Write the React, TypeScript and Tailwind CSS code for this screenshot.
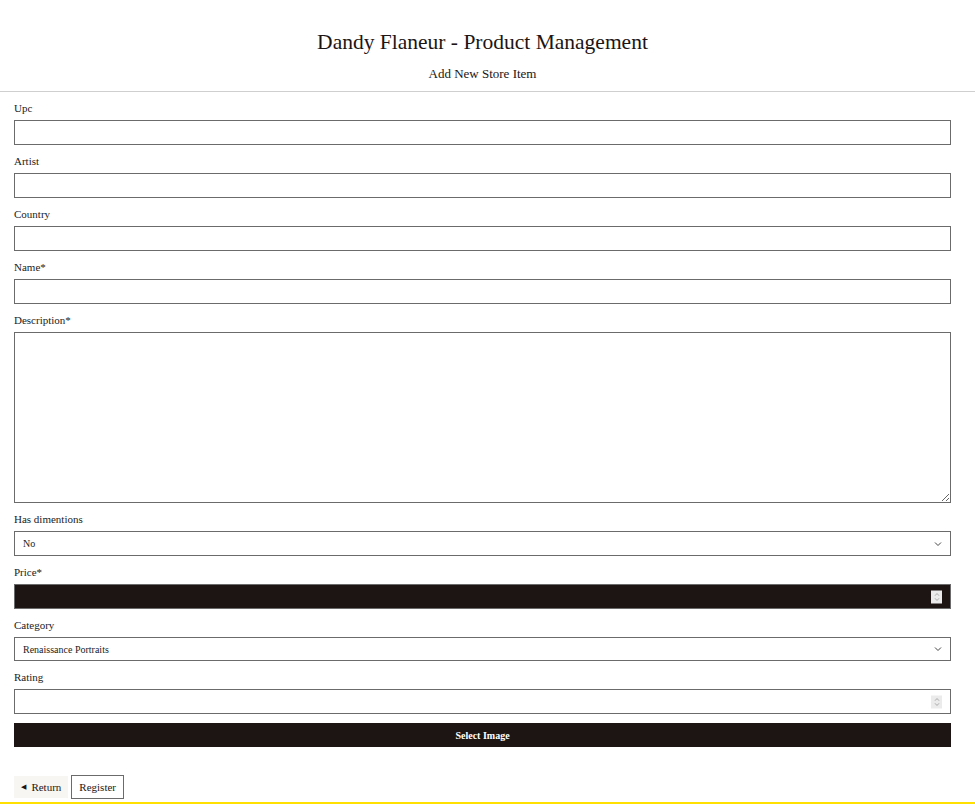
import type { ReactNode } from "react";

// 商品登録フォームの静的再現。フォントは Bodoni 系の代わりに Liberation Serif を使う。

const FONT = "font-['Liberation_Serif','DejaVu_Serif',serif]";

function Field({ label, children }: { label: string; children: ReactNode }) {
  return (
    <div className="flex flex-col">
      <label className="mt-[9px] mb-[5px] h-[14px] text-[11px] leading-[14px] text-[#222]">
        {label}
      </label>
      {children}
    </div>
  );
}

function Chevron() {
  return (
    <svg
      className="pointer-events-none absolute right-[9px] top-1/2 -translate-y-1/2"
      width="8"
      height="5"
      viewBox="0 0 8 5"
    >
      <path d="M1 1 L4 4 L7 1" fill="none" stroke="#444" strokeWidth="1" />
    </svg>
  );
}

/** 数値入力のスピナー（常時表示されている見た目を再現）。 */
function Spinner() {
  return (
    <span className="pointer-events-none absolute right-[9px] top-1/2 flex h-[13px] w-[11px] -translate-y-1/2 flex-col items-center justify-center gap-[1px] bg-[#ebebeb]">
      <svg width="6" height="4" viewBox="0 0 6 4">
        <path d="M1 3.2 L3 1 L5 3.2" fill="none" stroke="#aaa" strokeWidth="1" />
      </svg>
      <svg width="6" height="4" viewBox="0 0 6 4">
        <path d="M1 0.8 L3 3 L5 0.8" fill="none" stroke="#aaa" strokeWidth="1" />
      </svg>
    </span>
  );
}

const inputCls =
  "block h-[25px] w-full border border-[#6b6b6b] bg-white px-2 text-[10px] text-[#222] outline-none";

export default function App() {
  return (
    <div className={`${FONT} min-h-[805px] bg-white text-[#1c1514]`}>
      <header className="flex flex-col items-center border-b border-[#cfcfcf] pt-[27px] pb-[9px] pr-[10px]">
        <h1 className="text-[21.5px] leading-[30px]">Dandy Flaneur - Product Management</h1>
        <h2 className="mt-[9px] text-[13px] leading-[16px]">Add New Store Item</h2>
      </header>

      <form className="flex flex-col pl-[14px] pr-[24px]">
        <Field label="Upc">
          <input className={inputCls} />
        </Field>
        <Field label="Artist">
          <input className={inputCls} />
        </Field>
        <Field label="Country">
          <input className={inputCls} />
        </Field>
        <Field label="Name*">
          <input className={inputCls} />
        </Field>
        <Field label="Description*">
          <textarea className="block h-[171px] w-full border border-[#6b6b6b] bg-white p-2 text-[10px] outline-none" />
        </Field>
        <Field label="Has dimentions">
          <div className="relative">
            <select className={`${inputCls} appearance-none`} defaultValue="No">
              <option>No</option>
              <option>Yes</option>
            </select>
            <Chevron />
          </div>
        </Field>
        <Field label="Price*">
          <div className="relative">
            <input className="block h-[25px] w-full border border-[#6b6b6b] bg-[#1c1514] px-2 text-[10px] text-white outline-none" />
            <Spinner />
          </div>
        </Field>
        <Field label="Category">
          <div className="relative">
            <select
              className="block h-[24px] w-full appearance-none border border-[#6b6b6b] bg-white px-2 text-[10px] text-[#222] outline-none"
              defaultValue="Renaissance Portraits"
            >
              <option>Renaissance Portraits</option>
            </select>
            <Chevron />
          </div>
        </Field>
        <Field label="Rating">
          <div className="relative">
            <input className={inputCls} />
            <Spinner />
          </div>
        </Field>

        <button
          type="button"
          className="mt-[9px] h-[24px] w-full bg-[#1c1514] text-[10px] font-bold text-white"
        >
          Select Image
        </button>

        <div className="mt-[28px] flex items-center gap-[3px]">
          <button
            type="button"
            className="flex h-[22px] items-center gap-[5px] bg-[#f7f6f3] pl-[7px] pr-[7px] text-[11px] text-[#1c1514]"
          >
            <span className="text-[7px] leading-none">◀</span>
            Return
          </button>
          <button
            type="button"
            className="h-[24px] border border-[#6b6b6b] bg-white px-[7px] text-[11px] text-[#1c1514]"
          >
            Register
          </button>
        </div>
      </form>

      <div className="mt-[3px] h-[2px] w-full bg-[#ffe000]" />
    </div>
  );
}
